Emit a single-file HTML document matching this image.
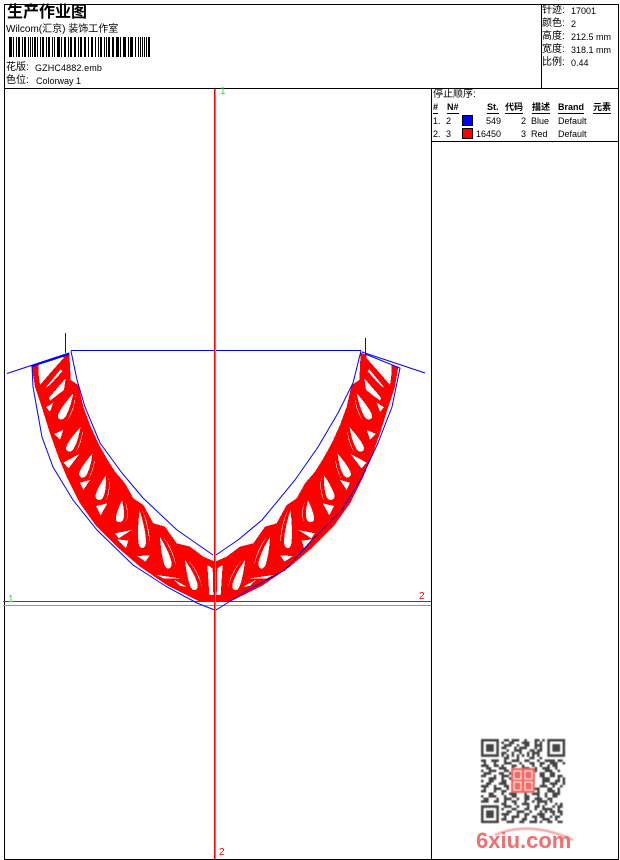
<!DOCTYPE html>
<html>
<head>
<meta charset="utf-8">
<title>生产作业图</title>
<style>
html,body{margin:0;padding:0;background:#fff;}
#p{position:relative;width:620px;height:860px;overflow:hidden;background:#fff;font-family:"Liberation Sans","WenQuanYi Zen Hei","Noto Sans CJK SC",sans-serif;font-size:9px;color:#000;}
#p span{position:absolute;white-space:nowrap;line-height:12px;}
.r{text-align:right;}
.b{font-weight:bold;border-bottom:1px solid #000;line-height:11px!important;height:11px;}
svg{position:absolute;left:0;top:0;}
</style>
</head>
<body>
<div id="p">
<svg width="620" height="860" viewBox="0 0 620 860" shape-rendering="crispEdges">
  <defs>
    <path id="d" d="M0-50C6-30 16 0 14 28C12 50-14 52-15 30C-15 5-8-25 0-50ZM10-48C24-25 32 10 26 42C28 10 22-25 10-48Z"/>
    <g id="half">
      <path fill="#f00" d="M95 110L115 105L116 135L120 165L150 130L190 85L190 75L208 68L212 150L235 165L250 230L270 285L295 340L320 385L345 425L375 460L400 505L430 525L460 580L495 590L530 640L570 650L610 680L645 695L645 815L600 815L550 790L500 765L420 710L350 650L290 590L240 520L200 440L175 380L150 310L125 230L105 170Z"/>
      <g fill="#fff">
        <path d="M182 118L187 124L150 165L136 174Z"/>
        <path d="M197 145L192 180L150 212L146 204Z"/>
        <use href="#d" transform="translate(199 231) rotate(27) scale(.8 .92)"/>
        <use href="#d" transform="translate(222 330) rotate(27) scale(.8 .85)"/>
        <use href="#d" transform="translate(260 408) rotate(25) scale(.8 .83)"/>
        <use href="#d" transform="translate(306 475) rotate(17) scale(.85 .8)"/>
        <use href="#d" transform="translate(362 545) rotate(7) scale(.8 .7)"/>
        <use href="#d" transform="translate(424 600) rotate(-5) scale(.8 1.2)"/>
        <use href="#d" transform="translate(495 670) rotate(-17) scale(.8 1.04)"/>
        <use href="#d" transform="translate(572 737) rotate(-20) scale(.8 1)"/>
        <path d="M622 705L638 715L640 795L628 795Z"/>
        <path d="M138 232L160 218L150 245Z"/>
        <path d="M162 312L190 300L180 330Z"/>
        <path d="M190 398L238 372L206 415Z"/>
        <path d="M240 458L270 450L250 480Z"/>
        <path d="M288 528L322 520L302 556Z"/>
        <path d="M345 610L395 600L356 625Z"/>
        <path d="M352 628L385 632L378 655Z"/>
        <path d="M412 678L450 676L436 695Z"/>
        <path d="M470 735L540 745L490 745Z"/>
        <path d="M520 748L560 770L540 768Z"/>
      </g>
    </g>
  </defs>
  <!-- frame -->
  <path fill="none" stroke="#000" d="M4.5 4.5H618.5V859.5H4.5ZM4.5 88.5H618.5M541.5 4.5V88.5M431.5 88.5V859.5M431.5 141.5H618.5"/>
  <!-- barcode -->
  <path fill="#000" d="M9 37h3v20h-3zM13 37h1v20h-1zM16 37h1v20h-1zM18 37h2v20h-2zM22 37h1v20h-1zM24 37h2v20h-2zM28 37h1v20h-1zM30 37h1v20h-1zM32 37h1v20h-1zM34 37h2v20h-2zM37 37h1v20h-1zM40 37h1v20h-1zM42 37h2v20h-2zM46 37h1v20h-1zM48 37h2v20h-2zM52 37h1v20h-1zM54 37h1v20h-1zM57 37h3v20h-3zM61 37h1v20h-1zM64 37h2v20h-2zM68 37h1v20h-1zM70 37h2v20h-2zM74 37h2v20h-2zM78 37h1v20h-1zM80 37h2v20h-2zM84 37h2v20h-2zM88 37h1v20h-1zM91 37h2v20h-2zM95 37h1v20h-1zM98 37h1v20h-1zM100 37h2v20h-2zM104 37h1v20h-1zM106 37h1v20h-1zM108 37h2v20h-2zM112 37h2v20h-2zM116 37h3v20h-3zM120 37h1v20h-1zM123 37h3v20h-3zM128 37h1v20h-1zM130 37h3v20h-3zM135 37h1v20h-1zM138 37h1v20h-1zM140 37h1v20h-1zM142 37h1v20h-1zM144 37h1v20h-1zM146 37h1v20h-1zM148 37h2v20h-2z"/>
  <!-- axes -->
  <g stroke-width="1" fill="none">
    <path stroke="#0f0" d="M3 605.5H431"/>
    <path stroke="#f00" d="M3 601.5H431"/>
  </g>
  <!-- red pattern -->
  <g transform="translate(0 330) scale(.33333)"><use href="#half"/></g>
  <g transform="translate(430 0) scale(-1 1) translate(0 330) scale(.33333)"><use href="#half"/></g>
  <!-- blue outline -->
  <g fill="none" stroke="#00f" stroke-width="1" shape-rendering="auto">
    <path d="M71 350.500H361"/>
    <path d="M65.500 333V353M7 373.500L69 353M31 366L69 354"/>
    <path d="M71 351L77 380L85 407L100 443L122 473L143 498L177 530L213 555"/>
    <path d="M32 366L33 387L42 437L53 467L73 500L97 530L133 565L167 587L197 603L212 609L216 610L248 590L285 570L312 540L342 510L362 477L378 443L392 407L400 368L365 354"/>
    <path d="M216 555L238 540L262 520L295 480L318 447L338 413L353 383L361 351"/>
    <path d="M365.500 338V353M362 352L425 373"/>
  </g>
  <path d="M32 366L69 354" stroke="#00f" stroke-width="2" fill="none"/>
  <path fill="none" stroke="#f00" d="M214.500 89V859"/>
  <path fill="none" stroke="#0f0" d="M215.500 89V859"/>
</svg>

<span style="left:7px;top:4px;font-size:16px;font-weight:bold;line-height:18px;">生产作业图</span>
<span style="left:6px;top:24px;font-size:10px;">Wilcom(汇京) 装饰工作室</span>
<span style="left:6px;top:62px;font-size:10px;">花版:</span>
<span style="left:35px;top:62px;letter-spacing:.12px;">GZHC4882.emb</span>
<span style="left:6px;top:75px;font-size:10px;">色位:</span>
<span style="left:36px;top:75px;">Colorway 1</span>

<span style="left:542px;top:5px;font-size:10px;">针迹:</span><span style="left:571px;top:5px;">17001</span>
<span style="left:542px;top:18px;font-size:10px;">颜色:</span><span style="left:571px;top:18px;">2</span>
<span style="left:542px;top:31px;font-size:10px;">高度:</span><span style="left:571px;top:31px;">212.5 mm</span>
<span style="left:542px;top:44px;font-size:10px;">宽度:</span><span style="left:571px;top:44px;">318.1 mm</span>
<span style="left:542px;top:57px;font-size:10px;">比例:</span><span style="left:571px;top:57px;">0.44</span>

<span style="left:433px;top:89px;font-size:10px;">停止顺序:</span>
<span class="b" style="left:433px;top:102px;">#</span>
<span class="b" style="left:447px;top:102px;">N#</span>
<span class="b" style="left:487px;top:102px;">St.</span>
<span class="b" style="left:505px;top:102px;">代码</span>
<span class="b" style="left:532px;top:102px;">描述</span>
<span class="b" style="left:558px;top:102px;">Brand</span>
<span class="b" style="left:593px;top:102px;">元素</span>

<span style="left:433px;top:115px;">1.</span><span style="left:446px;top:115px;">2</span>
<div style="position:absolute;left:462px;top:115px;width:9px;height:9px;background:#00f;border:1px solid #000;"></div>
<span class="r" style="left:471px;width:30px;top:115px;">549</span>
<span class="r" style="left:506px;width:20px;top:115px;">2</span>
<span style="left:531px;top:115px;">Blue</span><span style="left:558px;top:115px;">Default</span>

<span style="left:433px;top:128px;">2.</span><span style="left:446px;top:128px;">3</span>
<div style="position:absolute;left:462px;top:128px;width:9px;height:9px;background:#f00;border:1px solid #000;"></div>
<span class="r" style="left:471px;width:30px;top:128px;">16450</span>
<span class="r" style="left:506px;width:20px;top:128px;">3</span>
<span style="left:531px;top:128px;">Red</span><span style="left:558px;top:128px;">Default</span>

<!-- axis labels -->
<span style="left:8px;top:594px;font-size:10px;color:#0f0;">1</span>
<span style="left:220px;top:86px;font-size:10px;color:#0f0;">1</span>
<span style="left:419px;top:591px;font-size:10px;color:#f00;">2</span>
<span style="left:219px;top:847px;font-size:10px;color:#f00;">2</span>

<!-- QR -->
<svg width="620" height="860" viewBox="0 0 620 860" style="filter:blur(.5px)">
  <g transform="translate(481 739) scale(2.55)">
    <g fill="none" stroke="#444">
      <path d="M.5.5h6v6h-6zM26.500.5h6v6h-6zM.5 26.500h6v6h-6z"/>
      <path stroke-width="3" d="M2 3.500h3M28 3.500h3M2 29.500h3"/>
      <path d="M9 .5h2m1 0h3m2 0h1m3 0h2m1 0h1
      M8 1.500h1m2 0h2m3 0h3m2 0h1m1 0h1
      M9 2.500h3m2 0h1m2 0h2m2 0h3
      M8 3.500h2m3 0h1m1 0h3m3 0h1m1 0h1
      M10 4.500h1m2 0h3m3 0h2m1 0h2
      M8 5.500h2m2 0h1m2 0h1m2 0h1m1 0h3
      M8 6.500h1m1 0h1m1 0h1m1 0h1m1 0h1m1 0h1m1 0h1m1 0h1
      M9 7.500h2m3 0h1m4 0h2m2 0h1
      M0 8.500h2m2 0h3m2 0h1m2 0h3m2 0h2m3 0h1m2 0h4m1 0h2
      M1 9.500h1m3 0h1m3 0h3m3 0h1m3 0h2m2 0h2m2 0h3m2 0h1
      M0 10.500h3m2 0h2m1 0h1m3 0h2m2 0h1m3 0h1m2 0h1m2 0h1m1 0h2
      M2 11.500h2m3 0h3m2 0h1m3 0h3m2 0h1m2 0h3m2 0h1
      M0 12.500h1m2 0h3m3 0h2m4 0h2m3 0h2m3 0h3m2 0h1
      M1 13.500h3m3 0h2m2 0h1m2 0h1m4 0h1m3 0h2m2 0h2
      M0 14.500h2m3 0h1m2 0h3m12 0h2m2 0h2m1 0h2
      M3 15.500h3m2 0h1m2 0h1m12 0h3m3 0h1m1 0h1
      M0 16.500h1m2 0h2m3 0h2m14 0h3m2 0h2m1 0h1
      M2 17.500h2m3 0h3m14 0h1m2 0h3m2 0h1
      M0 18.500h3m2 0h1m3 0h2m12 0h3m2 0h1m2 0h1
      M1 19.500h1m3 0h3m2 0h1m2 0h3m2 0h1m2 0h2m3 0h2m2 0h1
      M0 20.500h2m3 0h1m2 0h2m3 0h2m3 0h2m2 0h1m3 0h3m1 0h1
      M3 21.500h2m3 0h1m2 0h3m3 0h1m2 0h3m2 0h1m2 0h3
      M0 22.500h1m2 0h3m3 0h1m2 0h2m3 0h2m3 0h1m2 0h1m2 0h2
      M1 23.500h2m3 0h1m2 0h3m2 0h1m2 0h2m2 0h3m2 0h2
      M0 24.500h3m2 0h2m2 0h1m2 0h2m3 0h1m2 0h1m1 0h4m1 0h1
      M8 25.500h2m3 0h1m2 0h3m3 0h1m2 0h1m3 0h1m1 0h1
      M9 26.500h3m2 0h1m3 0h1m2 0h2m1 0h1m3 0h1m1 0h2
      M8 27.500h1m3 0h2m3 0h2m2 0h1m2 0h4m2 0h1
      M10 28.500h2m2 0h3m2 0h1m3 0h1m1 0h1m1 0h2m1 0h2
      M8 29.500h3m3 0h1m2 0h2m3 0h3m3 0h1m2 0h1
      M9 30.500h1m2 0h3m2 0h1m2 0h2m1 0h2m2 0h1m1 0h2
      M8 31.500h2m2 0h1m3 0h2m3 0h1m2 0h3m2 0h1
      M10 32.500h3m2 0h2m2 0h3m1 0h1m2 0h2m2 0h2"/>
    </g>
  </g>
  <rect x="511" y="768" width="24" height="25" fill="#f46a64"/>
  <path fill="none" stroke="#fff" d="M514 771h7v8h-7zM525 771h7v8h-7zM514 782h7v8h-7zM525 782h7v8h-7z"/>
  <path fill="none" stroke="#f7a8a8" stroke-width="2.500" d="M495 835Q530 820 573 840"/>
</svg>
<span style="left:476px;top:828px;font-size:22px;line-height:26px;font-weight:bold;color:#ef7070;filter:blur(.3px);">6xiu.com</span>
</div>
</body>
</html>
